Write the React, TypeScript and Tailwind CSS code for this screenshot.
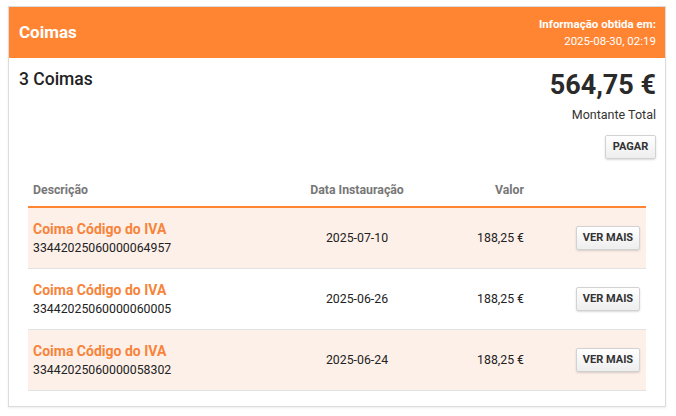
import React from "react";

const rows = [
  { ref: "33442025060000064957", date: "2025-07-10", value: "188,25 €", shaded: true },
  { ref: "33442025060000060005", date: "2025-06-26", value: "188,25 €", shaded: false },
  { ref: "33442025060000058302", date: "2025-06-24", value: "188,25 €", shaded: true },
];

export default function App() {
  return (
    <div className="min-h-screen bg-white pl-[8px] pt-[6px] font-['Roboto',sans-serif] text-[#222]">
      <div className="w-[658px] border border-[#dcdcdc] bg-white shadow-[0_1px_2px_rgba(0,0,0,0.08)]">
        {/* Orange header */}
        <div className="flex h-[51px] items-center justify-between bg-[#ff8533] pl-[10px] pr-[9px] text-white">
          <h1 className="text-[17px] font-bold">Coimas</h1>
          <div className="text-right leading-[17px]">
            <div className="text-[11.5px] font-bold">Informação obtida em:</div>
            <div className="text-[11.5px]">2025-08-30, 02:19</div>
          </div>
        </div>

        {/* Summary */}
        <div className="flex justify-between pl-[10px] pr-[9px] pt-[9px]">
          <div className="text-[17.5px] font-medium leading-[24px]">3 Coimas</div>
          <div className="flex flex-col items-end">
            <div className="mt-[1px] text-[27px] font-bold leading-[34px] text-[#2a2a2a]">564,75 €</div>
            <div className="mt-[5px] text-[12.5px] leading-[16px] text-[#333]">Montante Total</div>
            <button className="mt-[12px] h-[24px] w-[51px] rounded-[2px] border border-[#d2d2d2] bg-gradient-to-b from-white to-[#eeeeee] text-[11px] font-bold text-[#333] shadow-[0_1px_2px_rgba(0,0,0,0.15)]">
              PAGAR
            </button>
          </div>
        </div>

        {/* Table */}
        <div className="mx-[19px] mt-[14px] pb-[15px]">
          <div className="grid h-[33px] grid-cols-[262px_134px_105px_1fr] items-center pt-[2px] text-[12.3px] font-bold text-[#777]">
            <div className="pl-[5px]">Descrição</div>
            <div className="text-center">Data Instauração</div>
            <div className="pr-[5px] text-right">Valor</div>
            <div />
          </div>
          <div className="h-[2px] bg-[#ff8533]" />
          {rows.map((r) => (
            <div
              key={r.ref}
              className={`grid h-[61px] grid-cols-[262px_134px_105px_1fr] items-center border-b border-[#e2e2e2] text-[12.3px] ${
                r.shaded ? "bg-[#fdf0e9]" : "bg-white"
              }`}
            >
              <div className="pl-[5px]">
                <div className="text-[14px] font-bold leading-[20px] text-[#f7843a]">Coima Código do IVA</div>
                <div className="leading-[19px] text-[#222]">{r.ref}</div>
              </div>
              <div className="text-center">{r.date}</div>
              <div className="pr-[5px] text-right">{r.value}</div>
              <div className="flex justify-end pr-[6px]">
                <button className="h-[24px] w-[64px] rounded-[2px] border border-[#d2d2d2] bg-gradient-to-b from-white to-[#eeeeee] text-[11px] font-bold text-[#333] shadow-[0_1px_2px_rgba(0,0,0,0.15)]">
                  VER MAIS
                </button>
              </div>
            </div>
          ))}
        </div>
      </div>
    </div>
  );
}
